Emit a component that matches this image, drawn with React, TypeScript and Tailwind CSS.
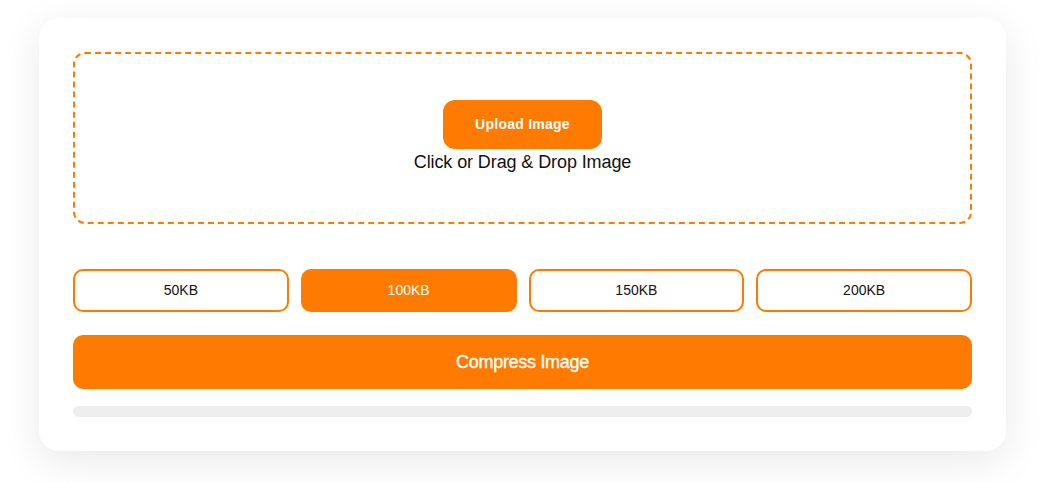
import { useState } from "react";

const sizes = ["50KB", "100KB", "150KB", "200KB"];

export default function App() {
  const [size, setSize] = useState("100KB");

  return (
    <div
      className="min-h-screen bg-white pt-[18px]"
      style={{ fontFamily: '"Liberation Sans", Arial, sans-serif' }}
    >
      <div className="mx-auto w-[967px] rounded-[20px] bg-white p-[34px] shadow-[0_10px_40px_rgba(0,0,0,0.09)]">
        <label className="flex h-[172px] cursor-pointer flex-col items-center justify-center rounded-[12px] border-2 border-dashed border-[#ff7b00] pb-[3px]">
          <span className="flex h-[49px] w-[159px] items-center justify-center rounded-[12px] bg-[#ff7b00] text-[14px] font-bold tracking-[0.25px] text-white">
            Upload Image
          </span>
          <span className="mt-[2px] text-[18px] leading-[22px] tracking-[-0.1px] text-[#111]">
            Click or Drag &amp; Drop Image
          </span>
        </label>

        <div className="mt-[45px] grid grid-cols-4 gap-[12px]">
          {sizes.map((s) => (
            <button
              key={s}
              onClick={() => setSize(s)}
              className={
                s === size
                  ? "h-[43px] rounded-[10px] border-2 border-[#ff7b00] bg-[#ff7b00] text-[14px] text-white"
                  : "h-[43px] rounded-[10px] border-2 border-[#ff7b00] bg-white text-[14px] text-[#111]"
              }
            >
              {s}
            </button>
          ))}
        </div>

        <button className="mt-[23px] flex h-[54px] w-full items-center justify-center rounded-[10px] bg-[#ff7b00] text-[18px] font-medium tracking-[-0.3px] text-white [-webkit-text-stroke:0.35px_#fff]">
          Compress Image
        </button>

        <div className="mt-[17px] h-[11px] w-full rounded-[6px] bg-[#eeeeee]" />
      </div>
    </div>
  );
}
